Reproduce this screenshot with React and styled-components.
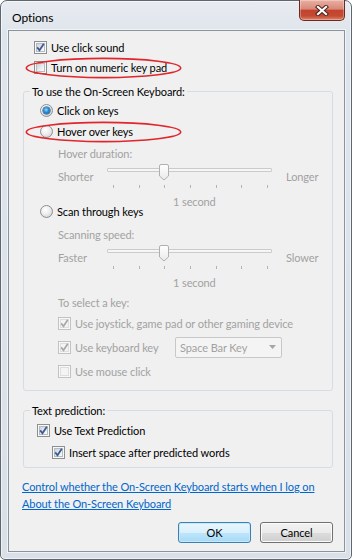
import React from 'react';
import styled, { createGlobalStyle, css } from 'styled-components';

const FONT = `"Lato", "Liberation Sans", sans-serif`;
const GREY_TEXT = '#a2a2a2';

const GlobalStyle = createGlobalStyle`
  html, body {
    margin: 0;
    padding: 0;
    background: #ffffff;
  }
  body {
    width: 352px;
    height: 560px;
    overflow: hidden;
  }
  * {
    box-sizing: border-box;
  }
`;

const Window = styled.div`
  width: 352px;
  height: 560px;
  display: flex;
  flex-direction: column;
  padding: 0 6px 7px 7px;
  border: 1px solid #5d6671;
  border-radius: 7px 7px 5px 5px;
  background: linear-gradient(to bottom, #e8ecf1 0, #dfe5ec 30px, #d9e0e8 100%);
  box-shadow: inset 0 0 0 1px rgba(255, 255, 255, 0.6);
  font-family: ${FONT};
  font-size: 11px;
  letter-spacing: -0.1px;
  color: #000;
`;

const TitleBar = styled.div`
  height: 29px;
  flex: none;
  display: flex;
  justify-content: space-between;
  align-items: flex-start;
`;

const Title = styled.div`
  margin: 9px 0 0 4px;
  font-size: 12px;
  line-height: 15px;
`;

const CloseButton = styled.div`
  width: 46px;
  height: 21px;
  margin-top: -1px;
  display: flex;
  align-items: center;
  justify-content: center;
  border: 1px solid #6a2a21;
  border-top: none;
  border-radius: 0 0 5px 5px;
  background: linear-gradient(
    to bottom,
    #eab0a3 0%,
    #d98877 45%,
    #c2432e 52%,
    #c44a33 80%,
    #de8468 100%
  );
  box-shadow: inset 0 0 0 1px rgba(255, 255, 255, 0.3);
`;

const Client = styled.div`
  flex: 1;
  display: flex;
  flex-direction: column;
  padding-top: 6px;
  border: 1px solid #8b939c;
  background: #f0f0f0;
  box-shadow: 0 0 0 1px rgba(255, 255, 255, 0.6);
`;

const Row = styled.div`
  position: relative;
  display: flex;
  align-items: center;
  gap: 4px;
  height: ${p => p.$h || 20}px;
  margin-top: ${p => p.$mt || 0}px;
  padding-left: ${p => p.$indent || 0}px;
  color: ${p => (p.$disabled ? GREY_TEXT : '#000')};
  white-space: nowrap;
`;

const Box = styled.span`
  position: relative;
  flex: none;
  width: 13px;
  height: 13px;
  border: 1px solid ${p => (p.$disabled ? '#c2c2c2' : '#8e8f8f')};
  background: #f8f8f8;

  &::before {
    content: '';
    position: absolute;
    inset: 1px;
    border: 1px solid ${p => (p.$disabled ? '#dedede' : '#b6bbc0')};
    background: ${p =>
      p.$disabled
        ? '#f4f4f4'
        : 'linear-gradient(135deg, #cfd2d6 0%, #e9ebed 55%, #fbfbfb 100%)'};
  }

  svg {
    position: absolute;
    left: 0;
    top: 0;
  }
`;

const RadioDot = styled.span`
  position: relative;
  flex: none;
  width: 13px;
  height: 13px;
  border-radius: 50%;
  border: 1px solid #8d8f92;
  background: radial-gradient(circle at 40% 35%, #ffffff 0%, #eeeeee 45%, #c4c6c9 100%);

  ${p =>
    p.$checked &&
    css`
      &::after {
        content: '';
        position: absolute;
        left: 2px;
        top: 2px;
        width: 7px;
        height: 7px;
        border-radius: 50%;
        background: radial-gradient(circle at 45% 40%, #9be2ff 0%, #2b8fdc 40%, #0e4c88 100%);
        box-shadow: 0 0 0 0.5px #173f66;
      }
    `}
`;

const Ring = styled.svg`
  position: absolute;
  left: ${p => p.$left}px;
  top: 0;
  pointer-events: none;
`;

const Group = styled.fieldset`
  margin: ${p => p.$mt}px 11px 0 14px;
  padding: 1px 0 ${p => p.$pb}px 0;
  min-inline-size: 0;
  border: 1px solid #d3dde3;
  border-radius: 3px;
`;

const Legend = styled.legend`
  margin-left: 6px;
  padding: 0 2px;
  line-height: 15px;
`;

const SliderRow = styled.div`
  display: flex;
  height: 26px;
  padding-left: 34px;
  color: ${GREY_TEXT};
`;

const EndLabel = styled.span`
  width: ${p => p.$w}px;
  margin-left: ${p => p.$ml || 0}px;
  margin-top: 6px;
  line-height: 15px;
`;

const Track = styled.div`
  position: relative;
  width: 165px;
  display: flex;
  flex-direction: column;
`;

const Groove = styled.div`
  height: 4px;
  margin-top: 5px;
  border: 1px solid #cbcbcb;
  border-radius: 1px;
  background: #f6f6f6;
`;

const Ticks = styled.div`
  display: flex;
  justify-content: space-between;
  margin: 13px 4px 0 6px;
`;

const Tick = styled.span`
  width: 1px;
  height: 3px;
  background: #b4b4b4;
`;

const Thumb = styled.svg`
  position: absolute;
  left: ${p => p.$left}px;
  top: 1px;
`;

const Caption = styled.div`
  margin-top: 6px;
  margin-bottom: ${p => p.$mb || 0}px;
  padding-left: 149px;
  line-height: 14px;
  color: ${GREY_TEXT};
`;

const KeyRow = styled.div`
  display: grid;
  grid-template-columns: 117px 107px;
  align-items: center;
  height: 24px;
  padding-left: 34px;
`;

const Select = styled.div`
  height: 21px;
  display: flex;
  align-items: center;
  justify-content: space-between;
  padding: 0 5px 0 4px;
  border: 1px solid #c8c8c8;
  border-radius: 2px;
  background: #f4f4f4;
  color: ${GREY_TEXT};
`;

const Links = styled.div`
  margin-top: 10px;
  padding-left: 13px;
  display: flex;
  flex-direction: column;
`;

const Link = styled.a`
  height: 17px;
  line-height: 17px;
  color: #0066cc;
  text-decoration: underline;
  align-self: flex-start;
  white-space: nowrap;
`;

const ButtonBar = styled.div`
  margin: auto 11px 8px 0;
  display: flex;
  justify-content: flex-end;
  gap: 9px;
`;

const Button = styled.div`
  width: 73px;
  height: 21px;
  display: flex;
  align-items: center;
  justify-content: center;
  border-radius: 3px;
  border: 1px solid ${p => (p.$default ? '#3c7fb1' : '#707070')};
  background: ${p =>
    p.$default
      ? 'linear-gradient(to bottom, #eaf6fd 0%, #d9f0fc 50%, #bee6fd 50%, #a7d9f5 100%)'
      : 'linear-gradient(to bottom, #f2f2f2 0%, #ebebeb 50%, #dddddd 50%, #cfcfcf 100%)'};
  box-shadow: inset 0 0 0 1px ${p => (p.$default ? '#c4ebfd' : '#fcfcfc')};
`;

function CheckBox({ checked, disabled }) {
  return (
    <Box $disabled={disabled}>
      {checked && (
        <svg width="11" height="11" viewBox="0 0 11 11">
          <path
            d="M2.2 5.4 L4.5 8.2 L8.8 1.8"
            fill="none"
            stroke={disabled ? '#a9a9a9' : '#3b5a98'}
            strokeWidth="1.8"
          />
        </svg>
      )}
    </Box>
  );
}

function RedRing({ left }) {
  return (
    <Ring $left={left} width="157" height="22" viewBox="0 0 157 22">
      <ellipse cx="78.5" cy="11" rx="77.2" ry="9.6" fill="none" stroke="#e2252b" strokeWidth="1.6" />
    </Ring>
  );
}

function Slider({ left, right }) {
  return (
    <SliderRow>
      <EndLabel $w={49}>{left}</EndLabel>
      <Track>
        <Groove />
        <Ticks>
          {[0, 1, 2, 3, 4, 5, 6].map(i => (
            <Tick key={i} />
          ))}
        </Ticks>
        <Thumb $left={52} width="10" height="17" viewBox="0 0 10 17">
          <defs>
            <linearGradient id="thumbFill" x1="0" y1="0" x2="0" y2="1">
              <stop offset="0" stopColor="#ffffff" />
              <stop offset="1" stopColor="#e9e9e9" />
            </linearGradient>
          </defs>
          <path
            d="M0.5 2 Q0.5 0.5 2 0.5 H8 Q9.5 0.5 9.5 2 V12 L5 16 L0.5 12 Z"
            fill="url(#thumbFill)"
            stroke="#b0b0b0"
          />
        </Thumb>
      </Track>
      <EndLabel $ml={14}>{right}</EndLabel>
    </SliderRow>
  );
}

function App() {
  return (
    <>
      <GlobalStyle />
      <Window>
        <TitleBar>
          <Title>Options</Title>
          <CloseButton>
            <svg width="14" height="11" viewBox="0 0 14 11">
              <path d="M3 2 L11 9 M11 2 L3 9" stroke="#4a2520" strokeWidth="4.2" strokeLinecap="square" />
              <path d="M3 2 L11 9 M11 2 L3 9" stroke="#ffffff" strokeWidth="2.2" strokeLinecap="square" />
            </svg>
          </CloseButton>
        </TitleBar>

        <Client>
          <Row $indent={25}>
            <CheckBox checked />
            <span>Use click sound</span>
          </Row>
          <Row $indent={25}>
            <CheckBox />
            <span>Turn on numeric key pad</span>
            <RedRing left={16} />
          </Row>

          <Group $mt={7} $pb={7}>
            <Legend>To use the On-Screen Keyboard:</Legend>
            <Row $indent={16} $h={21}>
              <RadioDot $checked />
              <span>Click on keys</span>
            </Row>
            <Row $indent={16} $h={21}>
              <RadioDot />
              <span>Hover over keys</span>
              <RedRing left={1} />
            </Row>
            <Row $indent={34} $mt={1} $disabled>
              Hover duration:
            </Row>
            <Slider left="Shorter" right="Longer" />
            <Caption $mb={-8}>1 second</Caption>
            <Row $indent={16} $h={21}>
              <RadioDot />
              <span>Scan through keys</span>
            </Row>
            <Row $indent={34} $mt={2} $disabled>
              Scanning speed:
            </Row>
            <Slider left="Faster" right="Slower" />
            <Caption>1 second</Caption>
            <Row $indent={34} $mt={2} $disabled>
              To select a key:
            </Row>
            <Row $indent={34} $h={23} $disabled>
              <CheckBox checked disabled />
              <span>Use joystick, game pad or other gaming device</span>
            </Row>
            <KeyRow>
              <Row $disabled>
                <CheckBox checked disabled />
                <span>Use keyboard key</span>
              </Row>
              <Select>
                <span>Space Bar Key</span>
                <svg width="7" height="4" viewBox="0 0 7 4">
                  <path d="M0 0 H7 L3.5 4 Z" fill="#a6a6a6" />
                </svg>
              </Select>
            </KeyRow>
            <Row $indent={34} $h={24} $disabled>
              <CheckBox disabled />
              <span>Use mouse click</span>
            </Row>
          </Group>

          <Group $mt={12} $pb={3}>
            <Legend>Text prediction:</Legend>
            <Row $indent={13} $h={22}>
              <CheckBox checked />
              <span>Use Text Prediction</span>
            </Row>
            <Row $indent={28} $h={23}>
              <CheckBox checked />
              <span>Insert space after predicted words</span>
            </Row>
          </Group>

          <Links>
            <Link>Control whether the On-Screen Keyboard starts when I log on</Link>
            <Link>About the On-Screen Keyboard</Link>
          </Links>

          <ButtonBar>
            <Button $default>OK</Button>
            <Button>Cancel</Button>
          </ButtonBar>
        </Client>
      </Window>
    </>
  );
}

export default App;
